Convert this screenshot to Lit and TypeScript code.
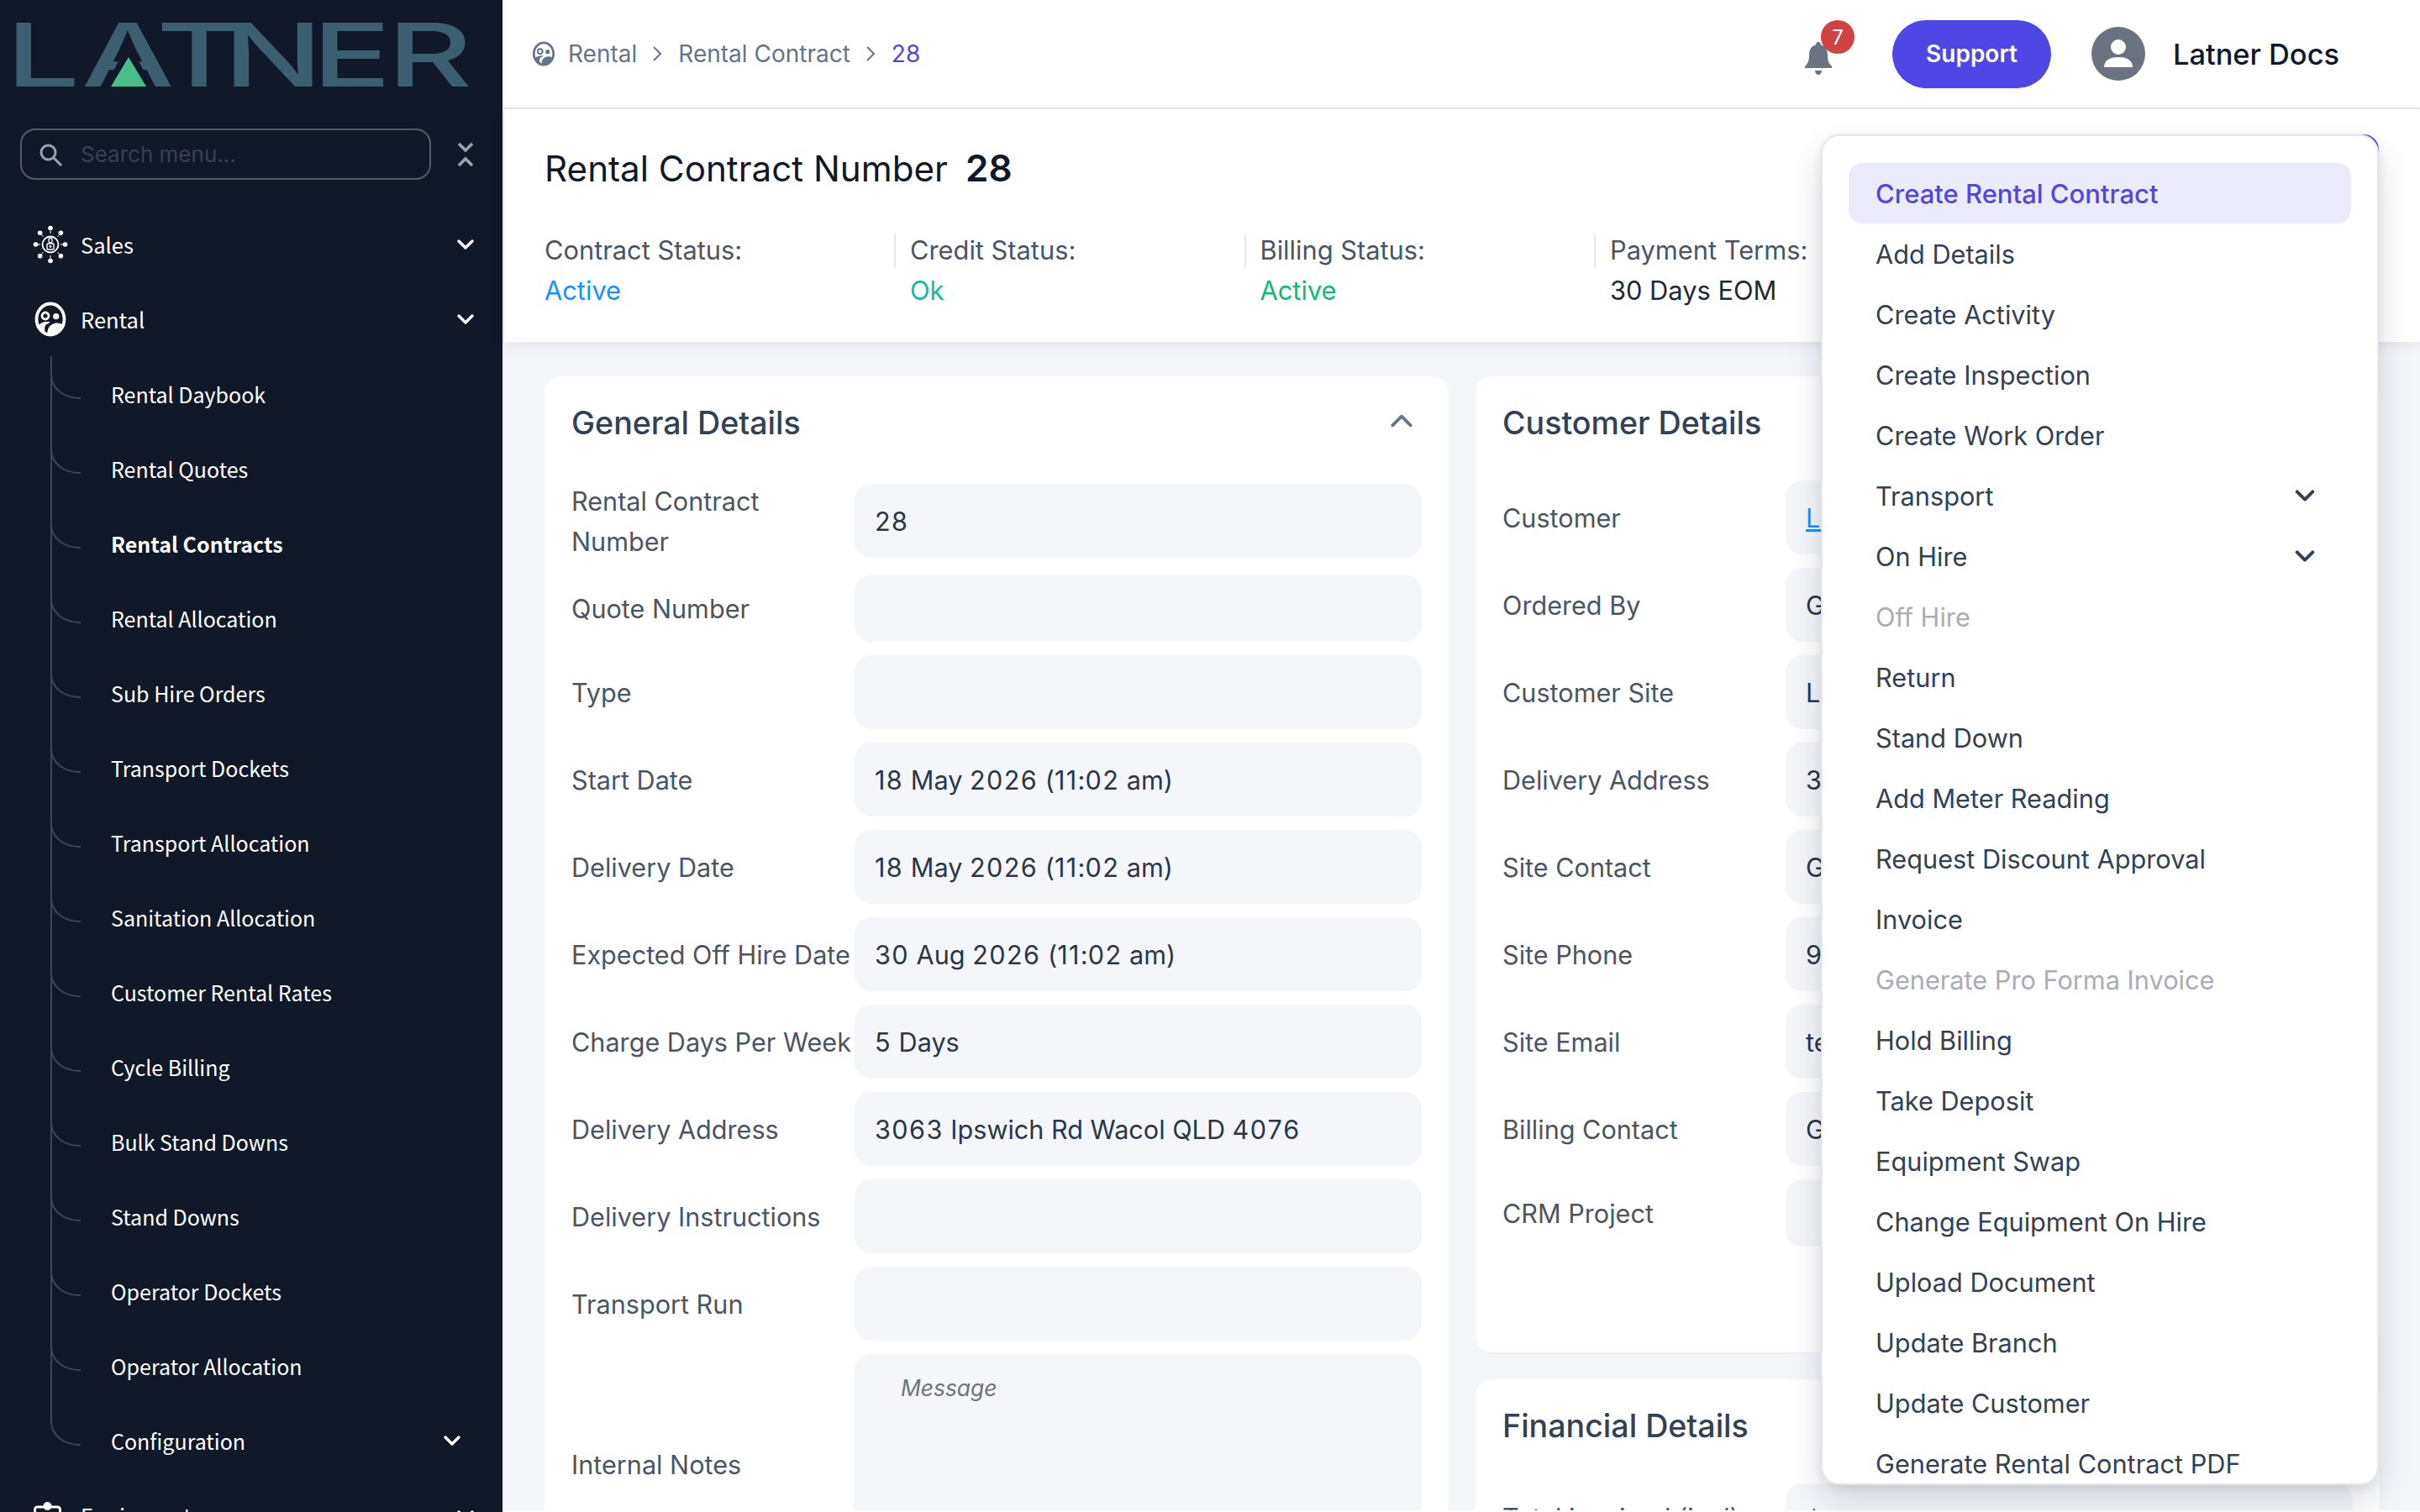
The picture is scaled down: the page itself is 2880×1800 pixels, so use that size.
import { LitElement, html, css, svg } from "lit";
import { customElement } from "lit/decorators.js";

const chevronDown = html`<svg class="chev" viewBox="0 0 24 24" width="24" height="24" fill="none" stroke="currentColor" stroke-width="3.4" stroke-linecap="round" stroke-linejoin="round"><path d="M4 8l8 8 8-8"/></svg>`;

const rentalIcon = (c: string) => svg`
  <ellipse cx="22" cy="24" rx="16.500" ry="18.500" fill="none" stroke="${c}" stroke-width="3.800"/>
  <circle cx="16" cy="20" r="4" fill="none" stroke="${c}" stroke-width="2.800"/>
  <circle cx="28.700" cy="20.700" r="3.600" fill="${c}"/>
  <path d="M7 32C10 28 16 26 22 27.500L16 31C15 34 15 36 15.500 39C12 38 9 35 7 32Z" fill="${c}"/>
  <path d="M18.500 42C18 35 21 30.500 27 29C31 28 35 29 37 31C35 37 29 42 22 42Z" fill="${c}"/>
`;

const salesDots = [0,45,90,135,180,225,270,315].map(a => {
  const r = a * Math.PI / 180;
  return [22 + 17.5 * Math.sin(r), 24 - 19.5 * Math.cos(r), 22 + 12 * Math.sin(r), 24 - 13 * Math.cos(r)];
});

const children = ["Rental Daybook","Rental Quotes","Rental Contracts","Rental Allocation","Sub Hire Orders","Transport Dockets","Transport Allocation","Sanitation Allocation","Customer Rental Rates","Cycle Billing","Bulk Stand Downs","Stand Downs","Operator Dockets","Operator Allocation","Configuration"];

const general: [string,string,string?][] = [
  ["Rental Contract Number","28"],["Quote Number","","short"],["Type",""],
  ["Start Date","18 May 2026 (11:02 am)"],["Delivery Date","18 May 2026 (11:02 am)"],
  ["Expected Off Hire Date","30 Aug 2026 (11:02 am)"],["Charge Days Per Week","5 Days"],
  ["Delivery Address","3063 Ipswich Rd Wacol QLD 4076"],["Delivery Instructions",""],["Transport Run",""],
];
const customer: [string,string,string?][] = [
  ["Customer","Latner Docs","link"],["Ordered By","Greg Latner"],["Customer Site","Latner Docs"],
  ["Delivery Address","3063 Ipswich Rd Wacol QLD 4076"],["Site Contact","Greg Latner"],["Site Phone","9 1234 5678"],
  ["Site Email","test@latner.com"],["Billing Contact","Greg Latner"],["CRM Project","","short"],
];
const statuses: [string,string,string][] = [
  ["Contract Status:","Active","blue"],["Credit Status:","Ok","teal"],["Billing Status:","Active","green"],["Payment Terms:","30 Days EOM","dark"],
];
const menu: [string,string?][] = [
  ["Create Rental Contract","active"],["Add Details"],["Create Activity"],["Create Inspection"],["Create Work Order"],
  ["Transport","sub"],["On Hire","sub"],["Off Hire","off"],["Return"],["Stand Down"],["Add Meter Reading"],
  ["Request Discount Approval"],["Invoice"],["Generate Pro Forma Invoice","off"],["Hold Billing"],["Take Deposit"],
  ["Equipment Swap"],["Change Equipment On Hire"],["Upload Document"],["Update Branch"],["Update Customer"],["Generate Rental Contract PDF"],
];

const withDigits = (t: string) => t.split(/(\d)/).map(p => /\d/.test(p) ? html`<span class="d">${p}</span>` : p);

@customElement("app-root")
export class AppRoot extends LitElement {
  static styles = css`
    :host { display: flex; width: 2880px; height: 1800px; overflow: hidden; font-family: Inter, "Liberation Sans", sans-serif; background: #fff; position: relative; }
    * { box-sizing: border-box; }
    .side { width: 600px; flex: none; height: 1800px; background: #111827; border-right: 2px solid #eef0f5; overflow: hidden; color: #fff; font-family: "Noto Sans CJK SC", "Noto Sans", sans-serif; }
    .logo { height: 130px; display: block; }
    .logo svg { display: block; }
    .logotext { font-family: Inter, sans-serif; font-weight: 500; font-size: 104px; fill: #3b5f6f; }
    .searchrow { display: flex; align-items: center; margin: 23px 0 0 24px; gap: 32px; }
    .search { width: 489px; height: 61px; border: 2px solid #565b66; border-radius: 18px; display: flex; align-items: center; padding-left: 20px; gap: 22px; }
    .search span { font-family: Inter, sans-serif; font-size: 26px; color: #374151; }
    .collapse { width: 18px; display: flex; flex-direction: column; gap: 6px; color: #9ca3af; }
    .collapse svg { display: block; }
    .nav { margin-top: 32px; }
    .top { display: flex; align-items: center; height: 89px; padding-left: 38px; font-size: 25.500px; position: relative; }
    .top .ic { width: 44px; height: 48px; margin-right: 14px; display: block; flex: none; }
    .top .chev { position: absolute; right: 32px; top: 33px; }
    .kids { list-style: none; margin: 0; padding: 0 0 0 132px; }
    .kids li { height: 89px; display: flex; align-items: center; font-size: 25px; position: relative; }
    .kids li::before { content: ""; position: absolute; left: -72px; top: 0; height: 49px; width: 34px; border-left: 2px solid #3f4652; border-bottom: 2px solid #3f4652; border-bottom-left-radius: 34px 28px; }
    .kids li.line::after { content: ""; position: absolute; left: -72px; top: 0; height: 89px; width: 2px; background: #3f4652; }
    .kids li.bold { font-weight: 600; }
    .kids .chev { position: absolute; right: 48px; top: 33px; }

    .main { flex: 1; min-width: 0; display: flex; flex-direction: column; height: 1798px; background: #fff; }
    .head { height: 130px; flex: none; border-bottom: 2px solid #e5e7eb; display: flex; align-items: center; padding: 0 96px 0 33px; background: #fff; }
    .crumbs { display: flex; align-items: center; font-size: 28px; color: #64748b; flex: 1; }
    .crumbs svg.bc { width: 32px; height: 34px; margin-right: 13px; margin-left: -2px; }
    .crumbs .sep { margin: 0 19px 0 18px; width: 12px; height: 20px; }
    .crumbs b { font-weight: 400; color: #4f46e5; }
    .bell { position: relative; width: 34px; height: 40px; margin-right: 71px; margin-top: 12px; }
    .bell svg { display: block; }
    .badge { position: absolute; left: 20px; top: -26px; width: 40px; height: 40px; border-radius: 50%; background: #d04343; color: #fff; font-size: 24px; display: flex; align-items: center; justify-content: center; }
    .support { width: 189px; height: 81px; border-radius: 41px; background: #4f46e5; color: #fff; font-size: 28px; font-weight: 600; display: flex; align-items: center; justify-content: center; margin-right: 48px; }
    .avatar { width: 64px; height: 64px; margin-right: 33px; display: block; }
    .uname { font-size: 34.400px; font-weight: 500; color: #111827; }

    .panel { flex: none; height: 277px; background: #fff; padding: 30px 48px 0; box-shadow: 0 4px 16px rgba(15,23,42,.08); position: relative; z-index: 1; }
    .titlerow { display: flex; justify-content: space-between; align-items: flex-start; height: 84px; }
    h1 { margin: -2px 0 0; font-size: 42.200px; font-weight: 400; color: #111827; line-height: 84px; }
    h1 b { font-weight: 600; font-size: 44px; margin-left: 21px; }
    .actionbtn { width: 120px; height: 80px; border-radius: 18px; background: #4f46e5; margin-right: 1px; }
    .stats { display: flex; margin-top: 30px; }
    .stat { width: 416.500px; height: 96px; padding-left: 19px; position: relative; font-size: 30.800px; line-height: 48px; white-space: nowrap; }
    .stat::before { content: ""; position: absolute; left: 0; top: 5px; width: 2px; height: 40px; background: #e5e7eb; }
    .stat:first-child { width: 416px; padding-left: 0; }
    .stat:first-child::before { display: none; }
    .stat .l { color: #4b5563; }
    .stat .v.blue { color: #1890ff; } .stat .v.teal { color: #14b8a6; } .stat .v.green { color: #10b981; } .stat .v.dark { color: #1f2937; }

    .body { flex: 1; min-height: 0; overflow: hidden; background: #f5f6fa; padding: 41px 48px 0; display: grid; grid-template-columns: 1076px 1076px; gap: 32px; align-items: start; }
    .card { background: #fff; border-radius: 20px; padding: 0 32px; box-shadow: 0 1px 2px rgba(15,23,42,.03); }
    .col { display: flex; flex-direction: column; gap: 32px; }
    .cardhead { height: 124px; display: flex; justify-content: space-between; align-items: center; padding-bottom: 14px; color: #64748b; }
    .cardhead svg { margin-right: 8px; margin-bottom: 4px; }
    h2 { margin: 0; font-size: 37.600px; font-weight: 500; color: #334155; }
    .row { display: grid; grid-template-columns: 337px 1fr; align-items: center; min-height: 88px; margin-bottom: 16px; font-size: 30.600px; line-height: 48px; color: #4b5563; }
    .row > div:first-child { padding-top: 1px; margin-bottom: -1px; }
    .row.short { min-height: 80px; }
    .row .input { height: 88px; background: #f5f6fa; border-radius: 20px; padding: 1px 24px 0; display: flex; align-items: center; color: #2b3648; white-space: pre; overflow: hidden; }
    .row .input .d { letter-spacing: 1.400px; }
    .row .input.short { height: 80px; }
    .row .input.fin { height: 80px; padding-top: 10px; }
    .row .input.link { color: #1890ff; text-decoration: underline; }
    .row .area { height: 262px; align-items: flex-start; padding: 22px 55px; font-style: italic; font-size: 26.400px; color: #6b7280; line-height: 36px; }
    .custcard { height: 1162px; }
    .fincard { min-height: 400px; }

    .drop { position: absolute; left: 2167px; top: 160px; width: 664px; height: 1608px; background: #fff; border: 2px solid #e5e7eb; border-radius: 22px; box-shadow: 0 20px 40px rgba(15,23,42,.14), 0 4px 12px rgba(15,23,42,.08); padding: 32px 31px 0; overflow: hidden; z-index: 5; font-size: 30.700px; color: #334155; }
    .mi { height: 72px; flex: none; display: flex; align-items: center; justify-content: space-between; padding: 0 32px; border-radius: 16px; white-space: nowrap; }
    .mi.active { background: #ecebfb; color: #4f46e5; font-weight: 500; font-size: 31px; }
    .mi.off { color: #a8adb7; }
    .mi .chev { width: 28px; height: 28px; margin-right: 9px; }
  `;

  row(r: [string,string,string?]) {
    return html`<div class="row ${r[2] === "short" ? "short" : ""}"><div>${r[0]}</div><div class="input ${r[2] ?? ""}">${withDigits(r[1])}</div></div>`;
  }

  render() {
    const up = html`<svg viewBox="0 0 24 24" width="32" height="32" fill="none" stroke="currentColor" stroke-width="2.800" stroke-linecap="round" stroke-linejoin="round"><path d="M4 16l8-8 8 8"/></svg>`;
    const sep = html`<svg class="sep" viewBox="0 0 12 20" fill="none" stroke="#64748b" stroke-width="2"><path d="M2 2l8 8-8 8"/></svg>`;
    return html`
      <aside class="side">
        <div class="logo">
          <svg width="598" height="130" viewBox="0 0 598 130">
            <text class="logotext" y="103" x="4.700 64.700 124 177.300 247.700 307.300" transform="scale(1.5 1)">LATNER</text>
            <polygon points="153,48 126,103 180,103" fill="#111827"/>
            <polygon points="153,68 132,103 174,103" fill="#4bbd8a"/>
          </svg>
        </div>
        <div class="searchrow">
          <div class="search">
            <svg width="28" height="28" viewBox="0 0 28 28" fill="none" stroke="#9ca3af" stroke-width="3"><circle cx="11.500" cy="11.500" r="8.500"/><path d="M18 18l9 9"/></svg>
            <span>Search menu...</span>
          </div>
          <div class="collapse">
            <svg viewBox="0 0 18 12" width="18" height="12" fill="none" stroke="currentColor" stroke-width="3.600"><path d="M1 2l8 8 8-8"/></svg>
            <svg viewBox="0 0 18 12" width="18" height="12" fill="none" stroke="currentColor" stroke-width="3.600"><path d="M1 10l8-8 8 8"/></svg>
          </div>
        </div>
        <nav class="nav">
          <div class="top">
            <svg class="ic" viewBox="0 0 44 48">
              ${salesDots.map(d => svg`<circle cx="${d[0]}" cy="${d[1]}" r="2.800" fill="#fff"/><line x1="${d[0] + (d[2]-d[0])*.45}" y1="${d[1] + (d[3]-d[1])*.45}" x2="${d[2]}" y2="${d[3]}" stroke="#fff" stroke-width="1"/>`)}
              <circle cx="22" cy="24" r="9.500" fill="none" stroke="#fff" stroke-width="1.800"/>
              <rect x="20" y="16.500" width="4" height="5.500" rx="2" fill="none" stroke="#fff" stroke-width="1.300"/>
              <rect x="18" y="23" width="8" height="7" rx="1" fill="none" stroke="#fff" stroke-width="1.400"/><circle cx="22" cy="26.500" r="1.400" fill="#fff"/>
            </svg>
            Sales ${chevronDown}
          </div>
          <div class="top">
            <svg class="ic" viewBox="0 0 44 48">${rentalIcon("#fff")}</svg>
            Rental ${chevronDown}
          </div>
          <ul class="kids">
            ${children.map((c,i) => html`<li class="${i===2?"bold":""} ${i<14?"line":""}">${c}${i===14?chevronDown:""}</li>`)}
          </ul>
          <div class="top">
            <svg class="ic" viewBox="0 0 44 48" fill="none" stroke="#fff" stroke-width="3"><rect x="3.500" y="14" width="30" height="34" rx="3"/><circle cx="18.500" cy="13" r="5" fill="#fff" stroke="none"/></svg>
            Equipment ${chevronDown}
          </div>
        </nav>
      </aside>
      <div class="main">
        <header class="head">
          <div class="crumbs">
            <svg class="bc" viewBox="0 0 44 48">${rentalIcon("#64748b")}</svg>
            Rental ${sep} Rental Contract ${sep} <b>28</b>
          </div>
          <div class="bell">
            <svg width="34" height="40" viewBox="0 0 34 40" fill="#6b7280"><path d="M17 0c2 0 3 1.500 3 3.500C26 5 28 10 28 16c0 7 2 10 5 13v2H1v-2c3-3 5-6 5-13 0-6 2-11 8-12.500C14 1.500 15 0 17 0z"/><path d="M13 34h8c0 3-2 5-4 5s-4-2-4-5z"/></svg>
            <div class="badge">7</div>
          </div>
          <div class="support">Support</div>
          <svg class="avatar" viewBox="0 0 64 64"><circle cx="32" cy="32" r="32" fill="#6b7280"/><circle cx="32" cy="24" r="9" fill="#fff"/><path d="M15 48c0-9 8-12 17-12s17 3 17 12z" fill="#fff"/></svg>
          <div class="uname">Latner Docs</div>
        </header>
        <section class="panel">
          <div class="titlerow">
            <h1>Rental Contract Number<b>28</b></h1>
            <div class="actionbtn"></div>
          </div>
          <div class="stats">
            ${statuses.map(s => html`<div class="stat"><div class="l">${s[0]}</div><div class="v ${s[2]}">${s[1]}</div></div>`)}
          </div>
        </section>
        <div class="body">
          <div class="col">
            <section class="card">
              <div class="cardhead"><h2>General Details</h2>${up}</div>
              ${general.map(r => this.row(r))}
              <div class="row"><div>Internal Notes</div><div class="input area">Message</div></div>
            </section>
          </div>
          <div class="col">
            <section class="card custcard">
              <div class="cardhead"><h2>Customer Details</h2></div>
              ${customer.map(r => this.row(r))}
            </section>
            <section class="card fincard">
              <div class="cardhead"><h2>Financial Details</h2></div>
              <div class="row short"><div>Total invoiced (incl)</div><div class="input fin">$0.00</div></div>
            </section>
          </div>
        </div>
      </div>
      <div class="drop">
        ${menu.map(m => html`<div class="mi ${m[1] ?? ""}">${m[0]}${m[1]==="sub"?chevronDown:""}</div>`)}
      </div>
    `;
  }
}
